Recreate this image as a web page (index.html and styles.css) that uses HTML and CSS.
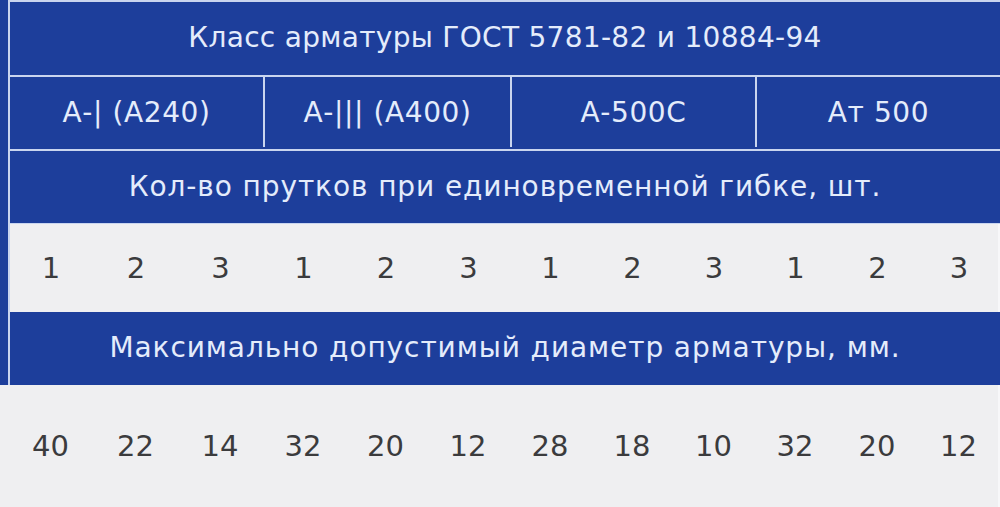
FILE: index.html
```html
<!DOCTYPE html>
<html lang="ru">
<head>
<meta charset="utf-8">
<title>Класс арматуры</title>
<link rel="stylesheet" href="styles.css">
</head>
<body>
<div class="sheet">
  <div class="frame">
    <div class="tbl">
      <div class="row head title">Класс арматуры ГОСТ 5781-82 и 10884-94</div>
      <div class="row head groups">
        <div class="cell">А-| (А240)</div>
        <div class="cell">А-||| (А400)</div>
        <div class="cell">А-500С</div>
        <div class="cell">Ат 500</div>
      </div>
      <div class="row head caption">Кол-во прутков при единовременной гибке, шт.</div>
      <div class="row nums first">
        <div>1</div><div>2</div><div>3</div>
        <div>1</div><div>2</div><div>3</div>
        <div>1</div><div>2</div><div>3</div>
        <div>1</div><div>2</div><div>3</div>
      </div>
      <div class="row head caption2">Максимально допустимый диаметр арматуры, мм.</div>
    </div>
  </div>
  <div class="row nums last">
    <div>40</div><div>22</div><div>14</div>
    <div>32</div><div>20</div><div>12</div>
    <div>28</div><div>18</div><div>10</div>
    <div>32</div><div>20</div><div>12</div>
  </div>
</div>
</body>
</html>
```

FILE: styles.css
```css
html, body {
  margin: 0;
  padding: 0;
  background: #efeff1;
}

body {
  font-family: "DejaVu Sans", "Liberation Sans", sans-serif;
  width: 1000px;
  height: 507px;
  overflow: hidden;
}

.sheet {
  display: flex;
  flex-direction: column;
}

.frame {
  background: #1d3e9b;
  padding-left: 8px;
}

.tbl {
  border-left: 2px solid #c9d5ef;
  border-top: 2px solid #c9d5ef;
  display: flex;
  flex-direction: column;
}

.row {
  display: flex;
  align-items: center;
  justify-content: center;
}

.head {
  background: #1d3e9b;
  color: #e4ecfb;
  font-size: 28px;
  font-weight: 400;
  letter-spacing: 0.6px;
  height: 73px;
  padding-bottom: 2px;
  box-sizing: border-box;
}

.title {
  height: 75px;
  letter-spacing: 0.3px;
  border-bottom: 2px solid #c9d5ef;
}

.groups {
  height: 74px;
  border-bottom: 2px solid #c9d5ef;
  align-items: stretch;
}

.groups .cell {
  display: flex;
  align-items: center;
  justify-content: center;
  border-left: 2px solid #c9d5ef;
}

.groups .cell:first-child {
  border-left: 0;
  flex: 0 0 253px;
}

.groups .cell:nth-child(2) {
  flex: 0 0 245px;
}

.groups .cell:nth-child(3) {
  flex: 0 0 243px;
}

.groups .cell:nth-child(4) {
  flex: 1 1 auto;
}

.caption {
  height: 73px;
  letter-spacing: 0.9px;
  border-bottom: 1px solid #c9d5ef;
}

.caption2 {
  height: 73px;
  letter-spacing: 0.9px;
}

.nums {
  display: grid;
  grid-template-columns: 85px 85px 84px 82px 83px 82px 82px 82px 81px 82px 82px 81px;
  background: #efeff1;
  color: #3b3b3d;
  font-size: 29px;
  font-weight: 400;
  text-align: center;
}

.nums.first {
  height: 88px;
  border-right: 2px solid #f7f7f9;
}

.nums.last {
  height: 122px;
  padding-left: 9px;
  border-right: 2px solid #f7f7f9;
}
```
